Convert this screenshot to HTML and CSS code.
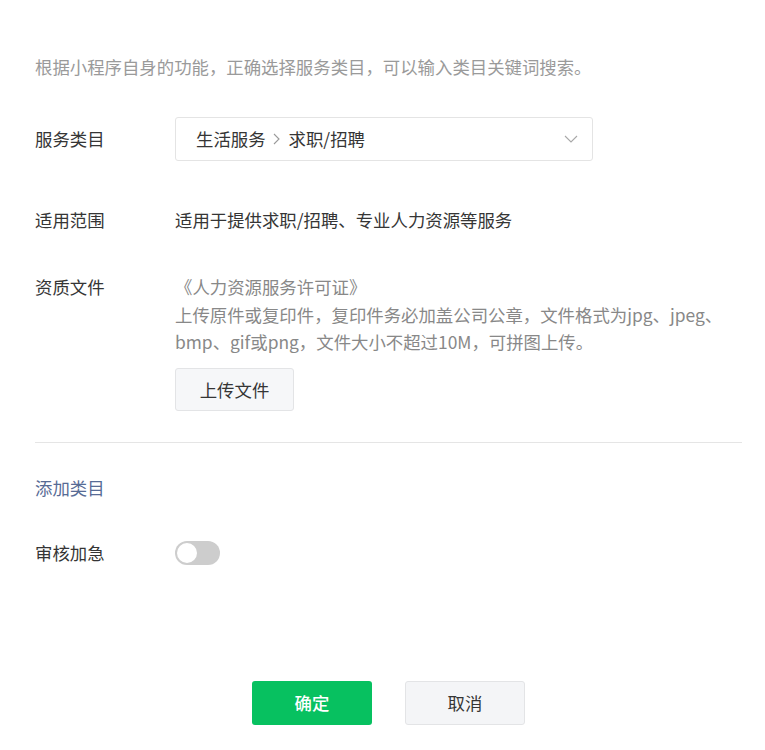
FILE: index.html
```html
<!DOCTYPE html>
<html lang="zh-CN">
<head>
<meta charset="utf-8">
<title>服务类目</title>
<link rel="stylesheet" href="styles.css">
</head>
<body>
<div class="page">
  <p class="note">根据小程序自身的功能，正确选择服务类目，可以输入类目关键词搜索。</p>

  <div class="row row-select">
    <div class="label label-tall">服务类目</div>
    <div class="select">
      <span class="sel-text">生活服务<svg class="crumb" width="7" height="12" viewBox="0 0 7 12"><path d="M1 1l5 5-5 5" fill="none" stroke="#9a9a9a" stroke-width="1.1"/></svg>求职/招聘</span>
      <svg class="chev" width="14" height="8" viewBox="0 0 14 8"><path d="M1 1l6 6 6-6" fill="none" stroke="#a8a8a8" stroke-width="1.1"/></svg>
    </div>
  </div>

  <div class="row row-scope">
    <div class="label">适用范围</div>
    <div class="value">适用于提供求职/招聘、专业人力资源等服务</div>
  </div>

  <div class="row row-file">
    <div class="label">资质文件</div>
    <div class="file">
      <div class="desc">《人力资源服务许可证》<br>上传原件或复印件，复印件务必加盖公司公章，文件格式为jpg、jpeg、<br>bmp、gif或png，文件大小不超过10M，可拼图上传。</div>
      <button class="btn btn-upload">上传文件</button>
    </div>
  </div>

  <div class="divider"></div>

  <a class="add-link">添加类目</a>

  <div class="row row-urgent">
    <div class="label">审核加急</div>
    <div class="switch"><span class="knob"></span></div>
  </div>

  <div class="actions">
    <button class="btn btn-primary">确定</button>
    <button class="btn btn-default">取消</button>
  </div>
</div>
</body>
</html>
```

FILE: styles.css
```css
html, body {
  margin: 0;
  padding: 0;
  background: #fff;
}
body {
  font-family: "Noto Sans CJK SC", "Noto Sans", sans-serif;
  font-size: 17.4px;
  color: #353535;
}
.page {
  margin-left: 35px;
  width: 707px;
  padding-top: 53px;
}
.note {
  margin: 0;
  line-height: 28px;
  color: #9a9a9a;
  white-space: nowrap;
}
.row {
  display: flex;
  align-items: flex-start;
}
.label {
  width: 140px;
  flex: none;
  line-height: 28px;
  color: #353535;
}
.label-tall {
  line-height: 44px;
}
.row-select {
  margin-top: 36px;
}
.select {
  box-sizing: border-box;
  width: 418px;
  height: 44px;
  border: 1px solid #e4e4e4;
  border-radius: 3px;
  display: flex;
  align-items: center;
  justify-content: space-between;
  padding: 0 14px 0 20px;
}
.sel-text {
  display: flex;
  align-items: center;
  line-height: 28px;
  color: #353535;
}
.crumb {
  margin: 0 9px 0 7px;
}
.row-scope {
  margin-top: 45px;
}
.value {
  line-height: 28px;
  color: #353535;
  white-space: nowrap;
}
.row-file {
  margin-top: 39px;
}
.desc {
  line-height: 27.5px;
  color: #888;
  white-space: nowrap;
}
.btn {
  font-family: inherit;
  font-size: 17.4px;
  box-sizing: border-box;
  border-radius: 3px;
  cursor: pointer;
}
.btn-upload {
  margin-top: 12px;
  width: 119px;
  height: 43px;
  background: #f6f7f9;
  border: 1px solid #e3e4e6;
  color: #353535;
}
.divider {
  margin-top: 31px;
  height: 1px;
  background: #e5e5e5;
}
.add-link {
  display: block;
  margin-top: 31px;
  line-height: 28px;
  color: #576b95;
}
.row-urgent {
  margin-top: 37px;
  align-items: center;
}
.switch {
  position: relative;
  width: 45px;
  height: 24px;
  border-radius: 12px;
  background: #cdcdcd;
}
.knob {
  position: absolute;
  left: 2px;
  top: 2px;
  width: 20px;
  height: 20px;
  border-radius: 50%;
  background: #fff;
}
.actions {
  margin-top: 114px;
  display: flex;
  justify-content: center;
  gap: 33px;
}
.btn-primary {
  width: 120px;
  height: 44px;
  background: #07c160;
  border: none;
  color: #fff;
  font-weight: 500;
}
.btn-default {
  width: 120px;
  height: 44px;
  background: #f4f5f7;
  border: 1px solid #e3e4e6;
  color: #353535;
}
```
